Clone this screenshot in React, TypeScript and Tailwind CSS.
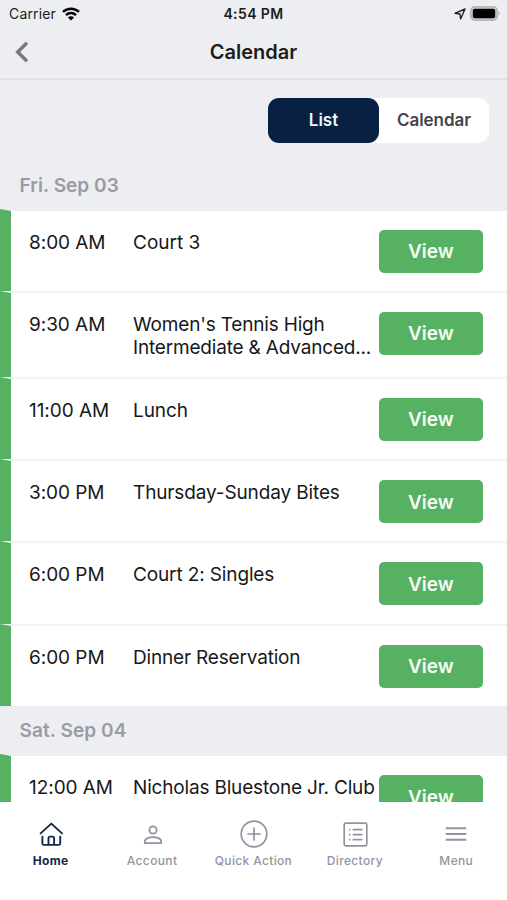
import type { ReactNode } from "react";

type Item = { time: string; title: string[]; height: string; tracking: string };

const friday: Item[] = [
  { time: "8:00 AM", title: ["Court 3"], height: "h-[82px]", tracking: "tracking-[0px]" },
  { time: "9:30 AM", title: ["Women's Tennis High", "Intermediate & Advanced..."], height: "h-[86px]", tracking: "tracking-[-0.18px]" },
  { time: "11:00 AM", title: ["Lunch"], height: "h-[82.3px]", tracking: "tracking-[-0.1px]" },
  { time: "3:00 PM", title: ["Thursday-Sunday Bites"], height: "h-[82.2px]", tracking: "tracking-[-0.13px]" },
  { time: "6:00 PM", title: ["Court 2: Singles"], height: "h-[82.3px]", tracking: "tracking-[-0.13px]" },
  { time: "6:00 PM", title: ["Dinner Reservation"], height: "h-[82.2px]", tracking: "tracking-[-0.18px]" },
];

const saturday: Item[] = [
  { time: "12:00 AM", title: ["Nicholas Bluestone Jr. Club"], height: "h-[82px]", tracking: "tracking-[-0.18px]" },
];

function Row({ item, first }: { item: Item; first: boolean }) {
  return (
    <div
      className={`flex shrink-0 items-start border-t-2 border-l-[11px] border-l-[#56b163] bg-white ${
        first ? "border-t-[#edeef2]" : "border-t-[#f3f3f4]"
      } ${item.height}`}
    >
      <div className="ml-[18px] w-[104px] shrink-0 pt-[20px] text-[19px] leading-[23px] tracking-[-0.05px] whitespace-nowrap text-[#17181a]">{item.time}</div>
      <div className={`w-[245.5px] shrink-0 pt-[20px] text-[19px] leading-[23px] whitespace-nowrap text-[#17181a] ${item.tracking}`}>
        {item.title.map((line) => (
          <div key={line}>{line}</div>
        ))}
      </div>
      <button className="mt-[19px] h-[43px] w-[104.5px] shrink-0 rounded-[5px] bg-[#56b163] pt-[2px] text-[19px] font-semibold text-[#f6fcf5]">
        View
      </button>
    </div>
  );
}

function Tab({ label, active, children }: { label: string; active?: boolean; children: ReactNode }) {
  return (
    <div className={`flex w-[101.4px] flex-col items-center ${active ? "text-[#14294a]" : "text-[#93949e]"}`}>
      <div className="flex h-[28px] items-center justify-center">{children}</div>
      <span className={`mt-[5px] text-[12px] leading-[16px] tracking-[0.35px] whitespace-nowrap ${active ? "font-bold" : "font-medium"}`}>
        {label}
      </span>
    </div>
  );
}

export default function App() {
  return (
    <div className="flex h-[900px] w-[507px] flex-col overflow-hidden bg-[#edeef2] font-['Inter',sans-serif]">
      <header className="h-[80px] shrink-0 border-b-2 border-[#e0e1e4]">
        <div className="grid h-[27px] grid-cols-3 items-center pr-[6px] pl-[9px] text-[14px] text-[#1c1c1e]">
          <div className="flex items-center gap-[6px]">
            <span className="tracking-[0.15px]">Carrier</span>
            <svg width="18" height="14" viewBox="0 0 18 14" fill="none" stroke="#050505" strokeWidth="2.5">
              <path d="M1 4.9C5.4.6 12.6.6 17 4.9" />
              <path d="M4 8.1C6.8 5.4 11.2 5.4 14 8.1" />
              <path d="M9 13.5 5.9 10.4C7.5 8.9 10.5 8.9 12.1 10.4Z" fill="#050505" stroke="none" />
            </svg>
          </div>
          <span className="-ml-[3px] text-center font-semibold tracking-[0.4px]">4:54 PM</span>
          <div className="flex items-center justify-end gap-[4px]">
            <svg width="12" height="12" viewBox="0 0 12 12" fill="none" stroke="#202124" strokeWidth="1.4" strokeLinejoin="round">
              <path d="M11 1 1 5.3 6 6 6.6 11Z" />
            </svg>
            <svg width="31" height="15" viewBox="0 0 31 15">
              <rect x=".8" y=".8" width="26.4" height="13.4" rx="4" fill="#d0d0d2" stroke="#a9aaac" strokeWidth="1.3" />
              <rect x="2.8" y="2.8" width="22.4" height="9.4" rx="2" fill="#000" />
              <path d="M28.6 5Q31 7.5 28.6 10Z" fill="#a9aaac" />
            </svg>
          </div>
        </div>
        <div className="grid h-[50px] grid-cols-[50px_1fr_50px] items-center">
          <svg className="ml-[14px]" width="16" height="22" viewBox="0 0 16 22" fill="none" stroke="#77787a" strokeWidth="3.4">
            <path d="M13 1.8 3.7 11 13 20.2" />
          </svg>
          <h1 className="text-center text-[20px] font-semibold text-[#1c1c1e]">Calendar</h1>
        </div>
      </header>

      <div className="flex h-[80px] shrink-0 justify-end pt-[17.5px] pr-[18px]">
        <div className="flex h-[45px] w-[221px] rounded-[11px] bg-white text-[17px] font-semibold">
          <div className="flex w-[111px] items-center justify-center rounded-[11px] bg-[#082142] pt-[2px] text-[#eef4fb]">List</div>
          <div className="flex w-[110px] items-center justify-center pt-[2px] tracking-[-0.05px] text-[#43444e]">Calendar</div>
        </div>
      </div>

      <main className="flex h-[642px] shrink-0 flex-col overflow-hidden">
        <h2 className="flex h-[49px] shrink-0 items-center pt-[3px] pl-[19.5px] text-[19px] font-semibold tracking-[0.05px] text-[#999ba5]">Fri. Sep 03</h2>
        {friday.map((item, i) => (
          <Row key={i} item={item} first={i === 0} />
        ))}
        <h2 className="flex h-[48.5px] shrink-0 items-center pt-[2px] pl-[19.5px] text-[19px] font-semibold tracking-[0.1px] text-[#999ba5]">Sat. Sep 04</h2>
        {saturday.map((item, i) => (
          <Row key={i} item={item} first={i === 0} />
        ))}
      </main>

      <nav className="flex h-[98px] shrink-0 bg-white pt-[18px]">
        <Tab label="Home" active>
          <svg width="26" height="26" viewBox="0 0 26 26" fill="none" stroke="currentColor" strokeWidth="1.9" strokeLinecap="round" strokeLinejoin="round">
            <path d="M2.6 12.4 13.3 2.6 24 12.4" />
            <path d="M4.4 15.6V22.4A1.5 1.5 0 0 0 5.9 23.9H9A1.5 1.5 0 0 0 10.5 22.4V17.2A1.6 1.6 0 0 1 12.1 15.6H14.5A1.6 1.6 0 0 1 16.1 17.2V22.4A1.5 1.5 0 0 0 17.6 23.9H20.7A1.5 1.5 0 0 0 22.2 22.4V15.6M10 23.9H16.6" />
          </svg>
        </Tab>
        <Tab label="Account">
          <svg className="mt-px ml-[2px]" width="20" height="20" viewBox="0 0 20 20" fill="none" stroke="currentColor" strokeWidth="1.8" strokeLinejoin="round">
            <circle cx="10" cy="5" r="3.6" />
            <path d="M1.8 18.2V16.4C1.8 13.2 7 12.1 10 12.1S18.2 13.2 18.2 16.4V18.2Z" />
          </svg>
        </Tab>
        <Tab label="Quick Action">
          <svg className="ml-px" width="28" height="28" viewBox="0 0 28 28" fill="none" stroke="currentColor" strokeWidth="1.7" strokeLinecap="round">
            <circle cx="14" cy="14" r="12.8" />
            <path d="M14 8V20M8 14H20" />
          </svg>
        </Tab>
        <Tab label="Directory">
          <svg className="ml-px" width="25" height="25" viewBox="0 0 25 25" fill="none" stroke="currentColor" strokeWidth="1.7" strokeLinecap="round">
            <rect x="1.2" y="1.2" width="22.6" height="22.6" rx="1.5" />
            <path d="M10.3 7.7H18.8M10.3 12.7H18.8M10.3 17.7H18.8M6.6 7.7H6.7M6.6 12.7H6.7M6.6 17.7H6.7" />
          </svg>
        </Tab>
        <Tab label="Menu">
          <svg width="22" height="16" viewBox="0 0 22 16" fill="none" stroke="currentColor" strokeWidth="1.9" strokeLinecap="round">
            <path d="M1.5 2.3H20.5M1.5 8H20.5M1.5 13.7H20.5" />
          </svg>
        </Tab>
      </nav>
    </div>
  );
}
